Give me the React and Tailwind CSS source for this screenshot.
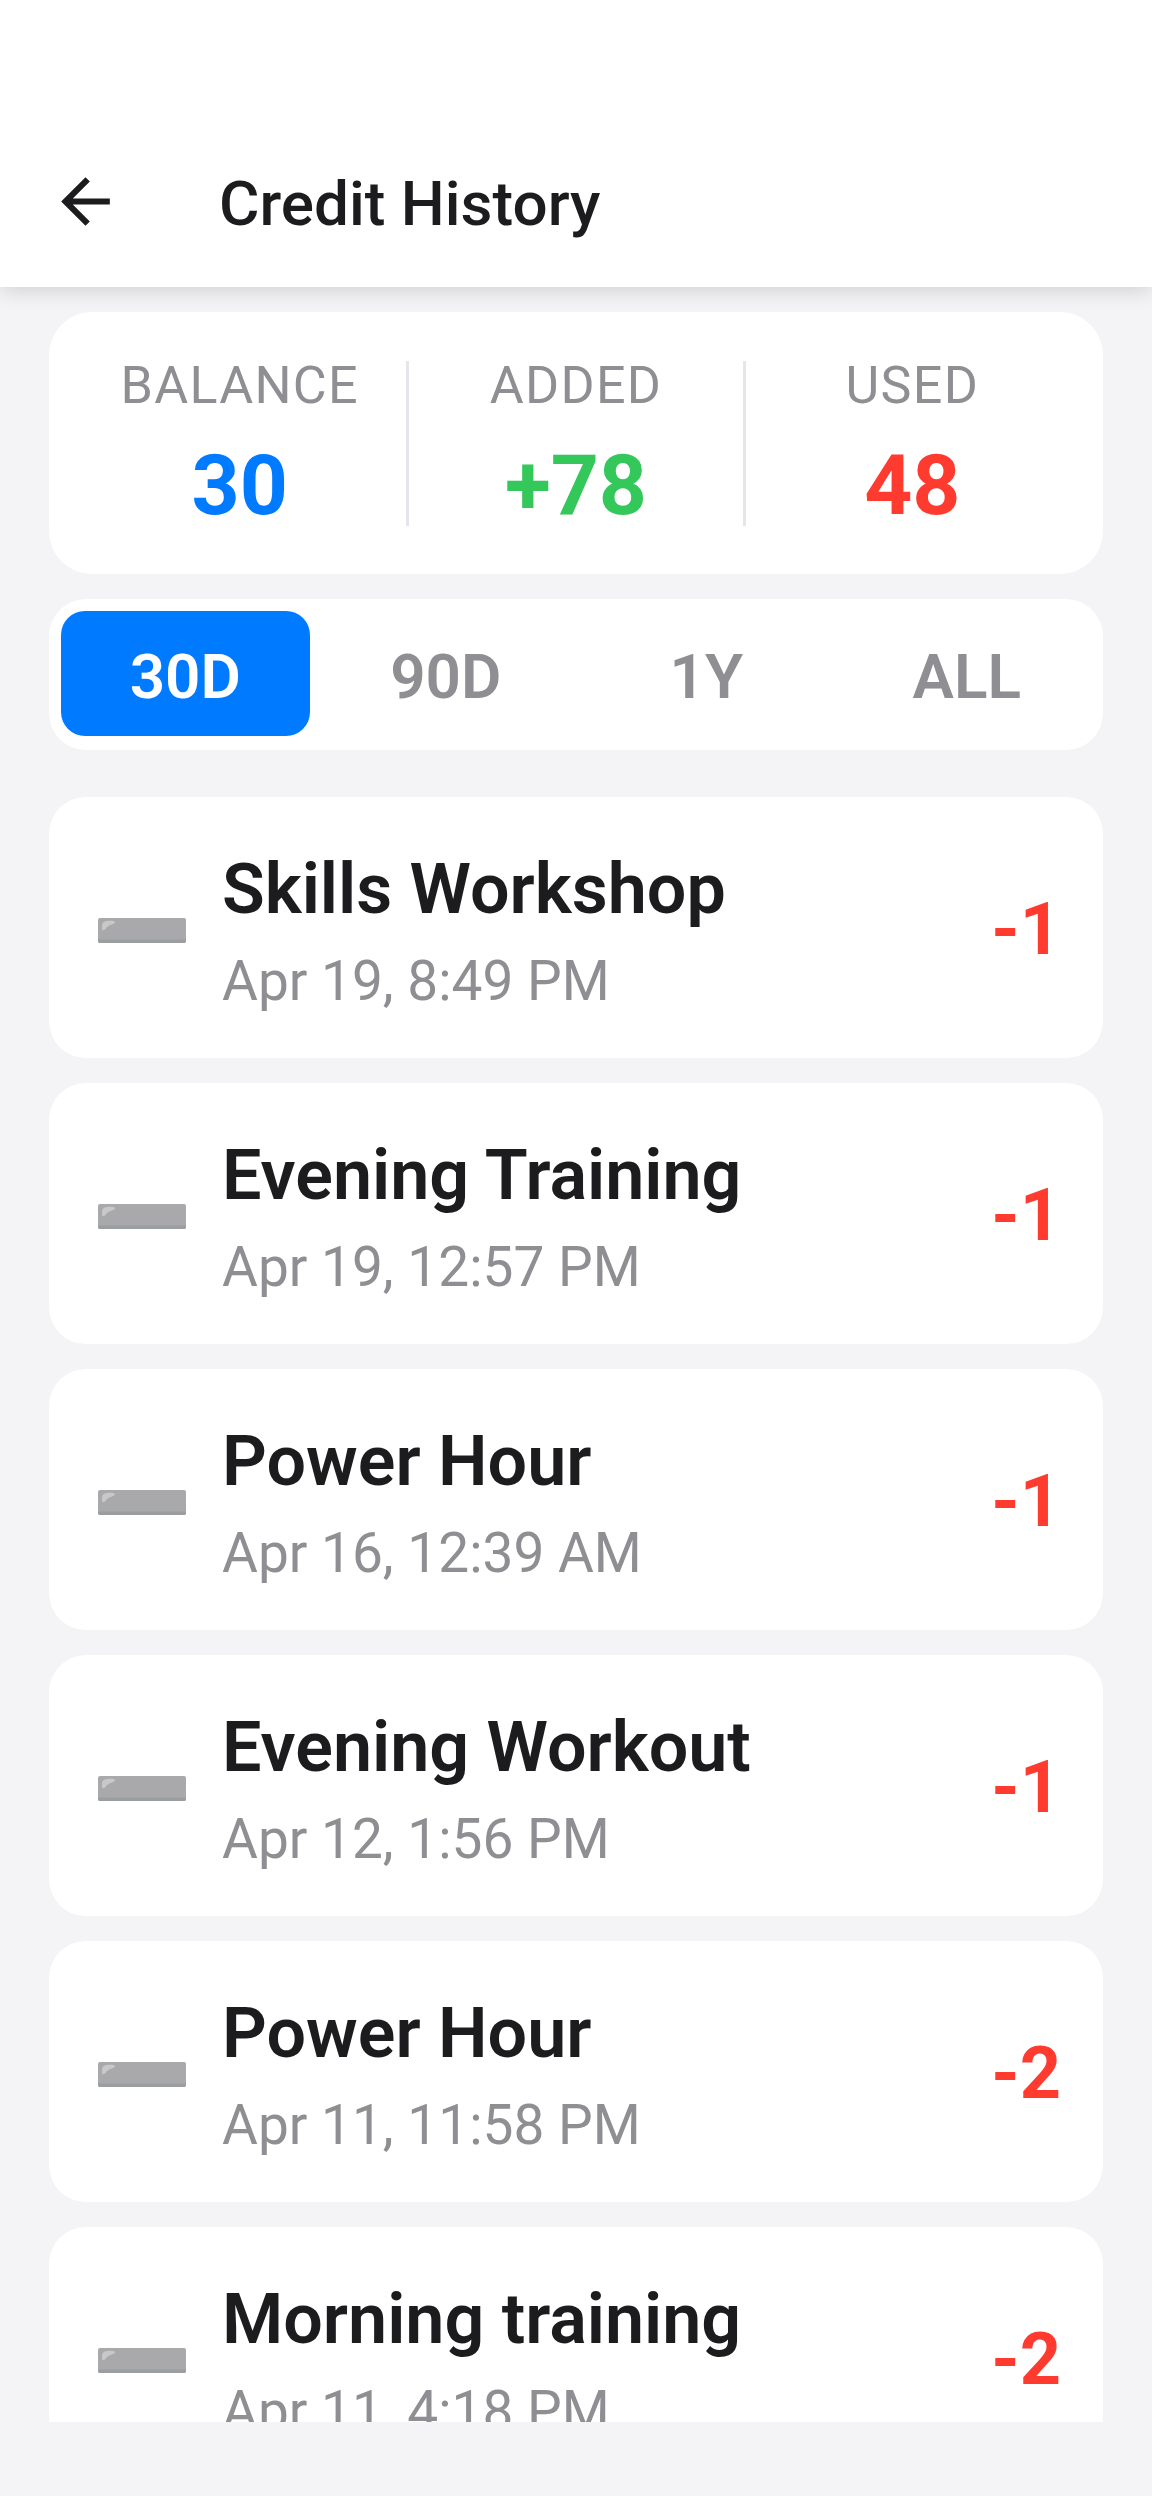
import React, { useState } from "react";
import clsx from "clsx";

const summary = [
  { label: "BALANCE", value: "30", color: "text-[#007aff]" },
  { label: "ADDED", value: "+78", color: "text-[#34c759]" },
  { label: "USED", value: "48", color: "text-[#ff3b30]" },
];

const periods = ["30D", "90D", "1Y", "ALL"];

const history = [
  { id: 1, title: "Skills Workshop", date: "Apr 19, 8:49 PM", amount: -1 },
  { id: 2, title: "Evening Training", date: "Apr 19, 12:57 PM", amount: -1 },
  { id: 3, title: "Power Hour", date: "Apr 16, 12:39 AM", amount: -1 },
  { id: 4, title: "Evening Workout", date: "Apr 12, 1:56 PM", amount: -1 },
  { id: 5, title: "Power Hour", date: "Apr 11, 11:58 PM", amount: -2 },
  { id: 6, title: "Morning training", date: "Apr 11, 4:18 PM", amount: -2 },
];

function BackIcon() {
  return (
    <svg viewBox="0 0 24 24" className="size-[73px]" fill="currentColor" aria-hidden="true">
      <path d="M20 11H7.83l5.59-5.59L12 4l-8 8 8 8 1.41-1.41L7.83 13H20v-2z" />
    </svg>
  );
}

function MinusIcon() {
  return (
    <svg viewBox="0 0 88 25" className="h-[25px] w-[88px] shrink-0" aria-hidden="true">
      <rect width="88" height="25" rx="2" fill="#a9a9ab" />
      <path d="M0 21.500H88V23a2 2 0 0 1-2 2H2a2 2 0 0 1-2-2z" fill="#9a9ea0" />
      <path
        d="M4 7.500C4 4.500 6 3 9.500 2.900c3-.1 6.500-.2 7.300.9.700 1.200-.4 2-2.800 2.600-3.200.8-4.900 2.300-6.200 4.200-.8 1.200-1.900 2-3 1.600C3.700 11.700 4 9.500 4 7.500z"
        fill="#c8c8c9"
      />
    </svg>
  );
}

function Header() {
  return (
    <header className="relative z-10 bg-white pt-[116px] shadow-[0_4px_20px_rgba(0,0,0,0.14)]">
      <div className="flex h-[171px] items-center pl-[49px]">
        <button type="button" aria-label="Back" className="cursor-pointer">
          <BackIcon />
        </button>
        <h1 className="ml-[97px] pt-1 text-[62px] leading-[72px] font-medium">
          Credit History
        </h1>
      </div>
    </header>
  );
}

function Summary() {
  return (
    <dl className="flex divide-x-3 divide-[#e5e5ea] rounded-[43px] bg-white px-6 pt-[49px] pb-12">
      {summary.map(({ label, value, color }) => (
        <div key={label} className="flex flex-1 flex-col items-center gap-[34px]">
          <dt className="text-[52px] leading-[50px] tracking-wide text-[#8e8e93]">
            {label}
          </dt>
          <dd className={clsx("text-[84px] leading-[81px] font-bold", color)}>
            {value}
          </dd>
        </div>
      ))}
    </dl>
  );
}

function PeriodTabs({ active, onChange }) {
  return (
    <div className="flex gap-3 rounded-[37px] bg-white px-3 pt-3 pb-3.5">
      {periods.map((period) => (
        <button
          key={period}
          type="button"
          aria-pressed={period === active}
          onClick={() => onChange(period)}
          className={clsx(
            "flex-1 cursor-pointer rounded-3xl pt-[29px] pb-[22px] text-[62px] leading-[74px] font-semibold",
            period === active ? "bg-[#007aff] text-white" : "text-[#8e8e93]"
          )}
        >
          {period}
        </button>
      ))}
    </div>
  );
}

function HistoryRow({ title, date, amount }) {
  return (
    <li className="flex items-center rounded-[37px] bg-white pt-[50px] pr-[42px] pb-[45px] pl-[49px]">
      <MinusIcon />
      <div className="ml-9 flex-1">
        <h2 className="text-[70px] leading-[84px] font-semibold">{title}</h2>
        <p className="mt-[18px] text-[55px] leading-[64px] text-[#8e8e93]">{date}</p>
      </div>
      <span className="text-[72px] leading-[84px] font-bold text-[#ff3b30]">
        {amount}
      </span>
    </li>
  );
}

export default function App() {
  const [period, setPeriod] = useState("30D");

  return (
    <div className="flex h-screen flex-col bg-[#f4f4f7] pb-[74px] font-['Roboto',sans-serif] text-[#1c1c1e]">
      <Header />
      <main className="flex min-h-0 flex-1 flex-col px-[49px] pt-[25px]">
        <Summary />
        <div className="mt-[25px]">
          <PeriodTabs active={period} onChange={setPeriod} />
        </div>
        <ul className="mt-[47px] flex min-h-0 flex-1 flex-col gap-[25px] overflow-y-auto [scrollbar-width:none]">
          {history.map((item) => (
            <HistoryRow key={item.id} {...item} />
          ))}
        </ul>
      </main>
    </div>
  );
}
